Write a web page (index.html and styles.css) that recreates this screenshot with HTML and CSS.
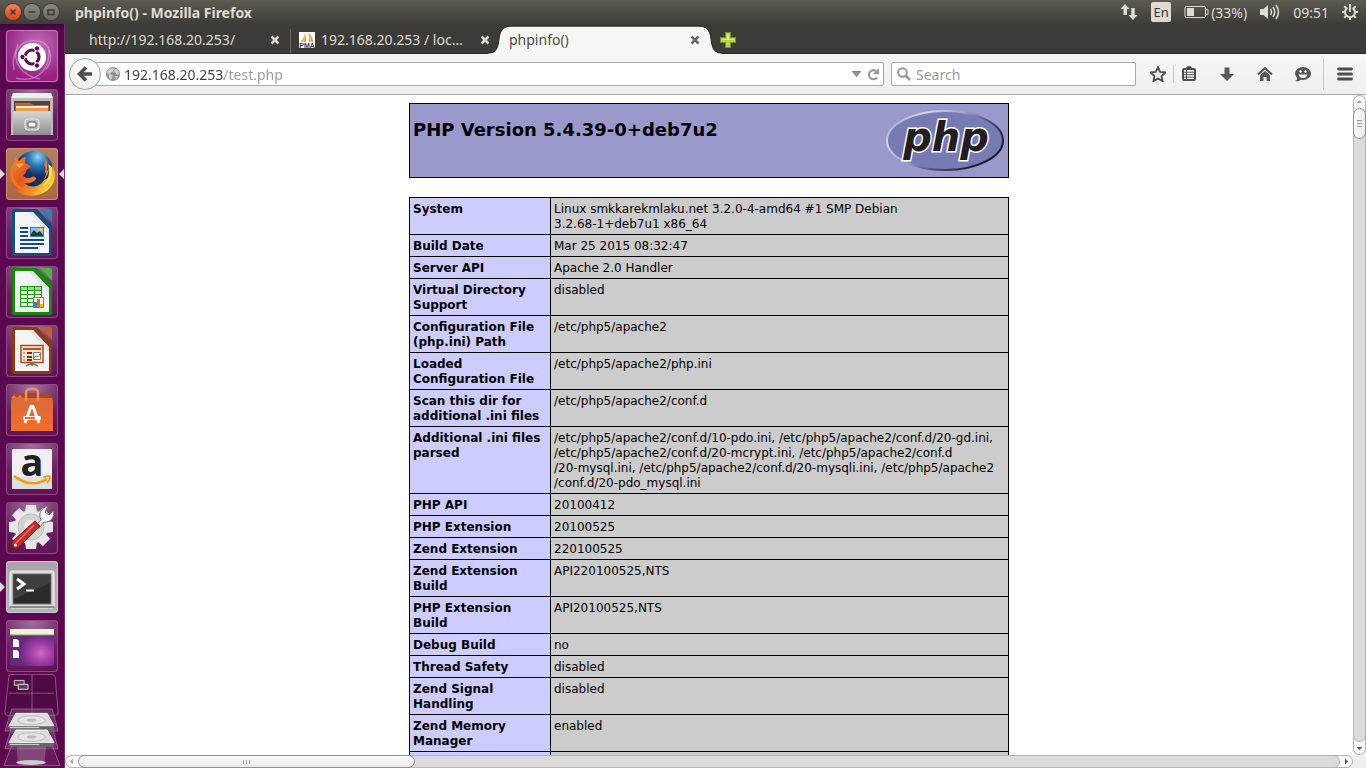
FILE: index.html
```
<!DOCTYPE html>
<html lang="en">
<head>
    <meta charset="UTF-8">
    <meta name="viewport" content="width=device-width, initial-scale=1.0">
    <title>phpinfo() - Mozilla Firefox</title>
    <link rel="stylesheet" href="styles.css">
</head>
<body>
    <header class="panel">
        <div class="window-buttons">
            <button class="win close" aria-label="Close window"><svg viewBox="0 0 16 16"><path d="M5.500 5.500l5 5M10.500 5.500l-5 5"/></svg></button>
            <button class="win" aria-label="Minimize"><svg viewBox="0 0 16 16"><path d="M4.500 8h7"/></svg></button>
            <button class="win" aria-label="Maximize"><svg viewBox="0 0 16 16"><path d="M5 6h6v4.500h-6z"/></svg></button>
        </div>
        <div class="window-title">phpinfo() - Mozilla Firefox</div>
        <div class="indicators">
            <svg width="18" height="18" viewBox="0 0 18 18"><path d="M5 1L0.500 6H3.500V12H7V6H9.500zM13 17L8.500 12H11.300V5H14.700V12H17.500z" fill="#dfdbd2"/></svg>
            <span class="lang">En</span>
            <span class="battery">
                <svg width="25" height="14" viewBox="0 0 25 14"><rect x="1" y="1.500" width="20.500" height="11" rx="1.500" fill="none" stroke="#dfdbd2"/><path d="M22 4.500h2v5h-2" fill="none" stroke="#dfdbd2"/><path d="M3 3h7v8H3z" fill="#dfdbd2"/></svg>
                (33%)
            </span>
            <svg width="20" height="18" viewBox="0 0 20 18"><path d="M0 6H3.500L8 2V16L3.500 12H0z" fill="#dfdbd2"/><path d="M10.500 6q2 3 0 6M13 4q3.500 5 0 10M16 2q5 7 0 14" fill="none" stroke="#dfdbd2" stroke-width="1.500"/></svg>
            <time>09:51</time>
            <svg width="16" height="16" viewBox="0 0 16 16"><g fill="none" stroke="#dfdbd2" stroke-width="2"><path d="M5.500 3.800a5 5 0 1 0 5 0"/><path d="M8 0v8"/><path d="M2.300 2.300l2 2M13.700 2.300l-2 2M0 8h3M13 8h3M2.300 13.700l2-2M13.700 13.700l-2-2M8 13v3"/></g></svg>
        </div>
    </header>

    <div class="desktop">
        <nav class="launcher" aria-label="Launcher">
            <ul>
                <li><button class="tile dash" aria-label="Dash">
                    <svg viewBox="0 0 52 52">
                        <g fill="none" stroke="#e3b0dc" stroke-opacity=".5" stroke-width="1.500">
                            <path d="M8 40C4 20 18 6 36 12C46 17 47 32 40 39"/><path d="M10 48C34 54 44 36 43 20"/><path d="M12 14C4 34 18 46 34 49"/>
                        </g>
                        <circle cx="26" cy="27" r="14" fill="#fff"/>
                        <circle cx="26" cy="27" r="7" fill="none" stroke="#5d0b50" stroke-width="3.200"/>
                        <path d="M26 27h-11M26 27l6-10M26 27l6 10" stroke="#fff" stroke-width="1.500"/>
                        <g fill="#5d0b50" stroke="#fff" stroke-width="1"><circle cx="16.500" cy="27" r="2.700"/><circle cx="31" cy="18.500" r="2.700"/><circle cx="31" cy="35.500" r="2.700"/></g>
                        <circle cx="26" cy="27" r="5.200" fill="#fff"/>
                    </svg></button></li>
                <li><button class="tile" aria-label="Files">
                    <svg viewBox="0 0 52 52">
                        <defs><linearGradient id="steel" x2="0" y2="1"><stop stop-color="#d8d8d8"/><stop offset="1" stop-color="#8e8e8e"/></linearGradient></defs>
                        <path d="M7 4H45L47 10V46H5V10z" fill="#bcbcbc"/><path d="M7 4H45L47 9H5z" fill="#eee"/>
                        <path d="M8 12H44V23H8z" fill="#50443b"/>
                        <path d="M9 14H25L27 16H43V24H9z" fill="#d35b1b"/><path d="M10 17H42V19H10z" fill="#fff1df"/><path d="M10 19H42V23H10z" fill="#f39a46"/>
                        <path d="M7 22H45V46H7z" fill="url(#steel)"/>
                        <rect x="19" y="30" width="14" height="11" rx="3" fill="#bbb" stroke="#e9e9e9"/>
                        <rect x="22" y="33" width="8" height="5" rx="1" fill="#fff" stroke="#555"/>
                    </svg></button></li>
                <li><button class="tile firefox running current" aria-label="Firefox">
                    <svg viewBox="0 0 52 52">
                        <defs>
                            <radialGradient id="globe" cx=".6" cy=".15"><stop stop-color="#8ad4f4"/><stop offset=".5" stop-color="#2377b8"/><stop offset="1" stop-color="#142f67"/></radialGradient>
                            <linearGradient id="fox" x1="0" y1="0" x2="1" y2=".7"><stop stop-color="#f39132"/><stop offset=".45" stop-color="#e4551d"/><stop offset=".75" stop-color="#f3942a"/><stop offset="1" stop-color="#fbe13c"/></linearGradient>
                        </defs>
                        <circle cx="28" cy="22" r="19" fill="url(#globe)"/>
                        <path d="M36 7C39 11 40 14 38 17C40 19 40 23 38 26L43 21C42 26 40 29 38 32C45 30 47 23 46 17C52 27 48 39 39 44C27 51 11 48 6 37C2 28 4 20 8 15L9 9L13 13C15 11 17 9 20 9L19 15L25 18C25 20 21 21 20 23C20 26 18 26 17 28C20 30 23 31 26 29C28 28 30 29 30 31C27 35 22 36 18 35C25 41 34 39 38 32C40 27 42 20 41 13z" fill="url(#fox)"/>
                        <path d="M42 16C45 27 41 35 35 39C43 37 47 28 46 19z" fill="#ffe14c"/>
                        <path d="M6 20C6 35 14 41 27 43C17 45 9 40 6 32z" fill="#f5842c" fill-opacity=".7"/>
                        <path d="M10 17q4-3 8-1l-5 4z" fill="#f9a947"/>
                    </svg></button></li>
                <li><button class="tile" aria-label="LibreOffice Writer">
                    <svg viewBox="0 0 52 52">
                        <path d="M8 2H31L46 18V47Q46 49 44 49H8Q6 49 6 47V4Q6 2 8 2z" fill="#124f7d"/><path d="M9 5H27L43 22V46H9z" fill="#f4f4f4"/>
                        <path d="M27 5L43 22V28L22 5z" fill="#dcdcdc" fill-opacity=".6"/><path d="M34 2H44Q46 2 46 4V15z" fill="#2a80b5"/>
                        <path d="M14 20h8v2h-8zM14 24h8v2h-8zM14 28h8v2h-8zM14 32h24v2H14zM14 36h24v2H14zM14 40h18v2H14z" fill="#154e7c"/>
                        <path d="M24 20H38V30H24z" fill="#2d80b5"/><path d="M25 21H37V29H25z" fill="#8dc5e8"/><path d="M25 29V27L28 23L31 26L34 24L37 28V29z" fill="#2e3436"/><circle cx="35" cy="22.500" r="1.500" fill="#f5d742"/>
                    </svg></button></li>
                <li><button class="tile" aria-label="LibreOffice Calc">
                    <svg viewBox="0 0 52 52">
                        <path d="M8 2H31L46 18V47Q46 49 44 49H8Q6 49 6 47V4Q6 2 8 2z" fill="#18880d"/><path d="M9 5H27L43 22V46H9z" fill="#f4f4f4"/>
                        <path d="M27 5L43 22V28L22 5z" fill="#dcdcdc" fill-opacity=".6"/><path d="M34 2H44Q46 2 46 4V15z" fill="#50b33b"/>
                        <path d="M14 20H36V41H14z" fill="#189c10"/>
                        <path d="M15 21h6v3h-6zM22 21h6v3h-6zM29 21h6v3h-6z" fill="#a3db8e"/>
                        <path d="M15 25h6v3h-6zM22 25h6v3h-6zM29 25h6v3h-6zM15 29h6v3h-6zM22 29h6v3h-6zM29 29h6v3h-6zM15 33h6v3h-6zM22 33h6v3h-6zM15 37h6v3h-6zM22 37h6v3h-6z" fill="#e5f6dd"/>
                        <path d="M27.500 31.500H37.500V41.500H27.500z" fill="#fff" stroke="#777"/><path d="M28 36h3v5h-3z" fill="#2985c7"/><path d="M31 33h3v8h-3z" fill="#e06b24"/><path d="M34 38h3v3h-3z" fill="#f5bd17"/>
                    </svg></button></li>
                <li><button class="tile" aria-label="LibreOffice Impress">
                    <svg viewBox="0 0 52 52">
                        <path d="M8 2H31L46 18V47Q46 49 44 49H8Q6 49 6 47V4Q6 2 8 2z" fill="#8b3c11"/><path d="M9 5H27L43 22V46H9z" fill="#f4f4f4"/>
                        <path d="M27 5L43 22V28L22 5z" fill="#dcdcdc" fill-opacity=".6"/><path d="M34 2H44Q46 2 46 4V15z" fill="#b9622e"/>
                        <path d="M15 20.500H37V37.500H15z" fill="#fae8de" stroke="#b34612" stroke-width="1.500"/><path d="M17 23h18v2H17z" fill="#c55018"/>
                        <path d="M17 27h2v2h-2zM17 31h2v2h-2zM17 34h2v2h-2z" fill="#e8a074"/><path d="M21 27h5v2h-5zM21 31h5v2h-5zM21 34h5v2h-5z" fill="#7c2e0b"/>
                        <path d="M27.500 27.500h7v7h-7z" fill="#fff" stroke="#777"/><path d="M28 33l2-2 2 1 2-3" fill="none" stroke="#2c9c2a"/>
                        <path d="M20 41l6-3 6 3M26 38v3" fill="none" stroke="#777" stroke-width="1.500"/>
                    </svg></button></li>
                <li><button class="tile" aria-label="Ubuntu Software Center">
                    <svg viewBox="0 0 52 52">
                        <defs><linearGradient id="bag" x2="0" y2="1"><stop stop-color="#d9693b"/><stop offset="1" stop-color="#f26d29"/></linearGradient></defs>
                        <path d="M8 9H44L47 17V47H5V17z" fill="url(#bag)"/><path d="M8 9H44L47 14H5z" fill="#a34725"/><path d="M5 14l3-3 3 3 3-3 3 3z" fill="#e67a49"/>
                        <path d="M20 17V9Q20 5 24 5H28Q32 5 32 9V17" fill="none" stroke="#f08e61" stroke-width="2.500"/>
                        <path d="M19 39L25 22.500H27L33 39" fill="none" stroke="#fff" stroke-width="3"/>
                        <rect x="17" y="32" width="18" height="4" rx="1.500" fill="#fff"/><path d="M19 33h10v2H19z" fill="#ee6d2f"/>
                    </svg></button></li>
                <li><button class="tile" aria-label="Amazon">
                    <svg viewBox="0 0 52 52">
                        <rect x="6" y="6" width="40" height="40" rx="1" fill="#f0f0f0"/><path d="M6 34H46V46H6z" fill="#dedede"/>
                        <text x="26" y="33" text-anchor="middle" font-family="Open Sans" font-weight="bold" font-size="38" fill="#222">a</text>
                        <path d="M8 33Q25 46 41 36" fill="none" stroke="#f59b0b" stroke-width="2.500"/><path d="M37 34.500Q43 32 44 33.500Q44 37 41 40" fill="none" stroke="#f59b0b" stroke-width="1.800"/>
                    </svg></button></li>
                <li><button class="tile" aria-label="System Settings">
                    <svg viewBox="0 0 52 52">
                        <g fill="#e7e7e7"><circle cx="25" cy="25" r="17"/><path d="M20 3h10l1 7H19zM20 47h10l1-7H19zM3 20v10l7 1V19zM47 20v10l-7 1V19zM6 13l7-7 6 5-8 8zM37 6l7 7-5 6-8-8zM6 37l7 7 6-5-8-8zM37 44l7-7-5-6-8 8z"/></g>
                        <circle cx="25" cy="25" r="13" fill="#d2d2d2" stroke="#bdbdbd"/><circle cx="25" cy="25" r="7" fill="#eee"/>
                        <path d="M29 24L35 18C32 11 35 6 42 4L39 10L43 13L47 9C49 16 44 21 38 20L32 27z" fill="#f1f1f1" stroke="#777" stroke-width="1"/>
                        <path d="M29 19L34 24L13 45Q10 48 7 45Q4 42 7 39z" fill="#cf2823" stroke="#8c1010"/><path d="M28 23L10 41" stroke="#ef7870" stroke-width="1.500"/><circle cx="9.500" cy="43" r="1.500" fill="#fff"/>
                    </svg></button></li>
                <li><button class="tile terminal running" aria-label="Terminal">
                    <svg viewBox="0 0 52 52">
                        <rect x="4" y="10" width="44" height="37" rx="2" fill="#d9d9d9" stroke="#f2f2f2"/><path d="M4 45h44v2H4z" fill="#8d8d8d"/>
                        <rect x="7" y="13" width="38" height="30" fill="#2b2b2b" stroke="#777"/><path d="M8 14H44V22L8 38z" fill="#4b4b4b" fill-opacity=".6"/>
                        <path d="M11 18L18 23L11 28" fill="none" stroke="#fff" stroke-width="3"/><path d="M20 29.500h8" stroke="#fff" stroke-width="2"/>
                    </svg></button></li>
                <li><button class="tile" aria-label="Show Desktop">
                    <svg viewBox="0 0 52 52">
                        <defs><radialGradient id="wall" cx=".7" cy=".65"><stop stop-color="#cb6cc4"/><stop offset=".5" stop-color="#a23ba6"/><stop offset="1" stop-color="#66297c"/></radialGradient></defs>
                        <path d="M4 9H48V44Q48 46 46 46H6Q4 46 4 44z" fill="url(#wall)"/><path d="M4 9H48V15H4z" fill="#f1efe0"/><path d="M4 15h44" stroke="#92985c"/>
                        <path d="M7 19h4l2 2v6H7zM7 30h4l2 2v6H7z" fill="#fff"/>
                    </svg></button></li>
                <!-- tiles folded at the bottom of the launcher -->
                <li class="folded"><button aria-label="More items">
                    <svg viewBox="0 0 65 96">
                        <g stroke="#b285ac" stroke-opacity=".6">
                            <path d="M11 2.500H53Q55 2.500 56 5L59 41Q59 44 57 44H7Q5 44 5 41L9 5Q9 2.500 11 2.500z" fill="#4a0841" fill-opacity=".6"/>
                            <path d="M9 21.500H55M32.500 3V42" fill="none"/>
                            <path d="M12 37.500H53L59 60H5zM12 55.500H53L59 78H5z" fill="#a17a9d" fill-opacity=".3"/>
                            <path d="M12 74.500H53L61 95H4z" fill="#79306f" fill-opacity=".4"/>
                        </g>
                        <path d="M14.500 8.500h10v5h-10z" fill="#5d3a58" stroke="#ccc"/><path d="M18.500 12.500h10v5h-10z" fill="#5d3a58" stroke="#ddd"/>
                        <path d="M17 75H47L45 93H18z" fill="#b4a0b3" fill-opacity=".35"/><ellipse cx="31.500" cy="92" rx="15" ry="2.500" fill="#ccc"/>
                        <g id="drive"><path d="M16 42H48L55 55H9z" fill="#dcdcdc" stroke="#f4f4f4"/><path d="M9 55H55V58Q55 59 53 59H11Q9 59 9 58z" fill="#666"/><path d="M10 56.500H40" stroke="#ddd"/><ellipse cx="32" cy="49" rx="14" ry="4.500" fill="#e4e4e4" stroke="#bbb"/><ellipse cx="32" cy="49" rx="5" ry="1.500" fill="#bbb"/></g>
                        <use href="#drive" y="17"/>
                    </svg></button></li>
            </ul>
        </nav>

        <main class="browser">
            <div class="tabs">
                <div class="tab">
                    <span class="tab-title">http://192.168.20.253/</span>
                    <button class="tab-close" aria-label="Close tab"><svg viewBox="0 0 16 16"><path d="M4.500 4.500l7 7M11.500 4.500l-7 7"/></svg></button>
                </div>
                <div class="tab next">
                    <svg class="favicon" viewBox="0 0 16 16"><path d="M0 0H16V16H0z" fill="#fff"/><path d="M7 1V10H2zM9 1Q14 4 14 10H10Q11 5 9 1z" fill="#f7981d"/><path d="M7 2l-3 8M11 4l1 6" stroke="#ffd27d" stroke-width="1"/><text x="8" y="15.500" text-anchor="middle" font-family="Liberation Sans" font-weight="bold" font-size="7" fill="#33346b">PMA</text></svg>
                    <span class="tab-title">192.168.20.253 / loc…</span>
                    <button class="tab-close" aria-label="Close tab"><svg viewBox="0 0 16 16"><path d="M4.500 4.500l7 7M11.500 4.500l-7 7"/></svg></button>
                </div>
                <div class="tab active">
                    <svg class="tab-shape" viewBox="0 0 234 29" preserveAspectRatio="none"><path d="M0 28.500C9 28 10 22 11 14C12 6 15 1.500 24 1.500H210C219 1.500 222 6 223 14C224 22 225 28 234 28.500V29H0z" fill="#f6f6f5"/><path d="M0 28C9 28 10 22 11 14C12 5 15 1 24 1H210C219 1 222 5 223 14C224 22 225 28 234 28" fill="none" stroke="#272622"/></svg>
                    <span class="tab-title">phpinfo()</span>
                    <button class="tab-close" aria-label="Close tab"><svg viewBox="0 0 16 16"><path d="M4.500 4.500l7 7M11.500 4.500l-7 7"/></svg></button>
                </div>
                <button class="new-tab" aria-label="New tab"><svg viewBox="0 0 16 16"><path d="M5.500 .5H10.500V5.500H15.500V10.500H10.500V15.500H5.500V10.500H.5V5.500H5.500z" fill="#b6d545" stroke="#70952b"/><path d="M7 2h2v5h5v1H2V7h5z" fill="#e0ee94"/></svg></button>
            </div>

            <div class="toolbar">
                <button class="back" aria-label="Back"><svg viewBox="0 0 16 16"><path d="M9 1.500L2.500 8L9 14.500M3 8H15" fill="none" stroke="#4d4d4d" stroke-width="3.500"/></svg></button>
                <div class="field url">
                    <svg width="14" height="14" viewBox="0 0 14 14"><circle cx="7" cy="7" r="7" fill="#929292"/><path d="M1 5L3 2L7 1L8 3L6 5L4 6L5 8L7 9L5 13L3 11L3 8zM9 2L12 3L13 7L11 8L10 6L8 5zM9 9l3 0-2 4z" fill="#d2d2d2"/></svg>
                    <input type="text" id="address" aria-label="Address" value="192.168.20.253/test.php">
                    <button aria-label="Show history"><svg width="9" height="6" viewBox="0 0 9 6"><path d="M.5.5h8L4.500 5.500z" fill="#999" stroke="#777"/></svg></button>
                    <button aria-label="Reload"><svg width="12" height="13" viewBox="0 0 12 13"><path d="M9 3A4.500 4.500 0 1 0 10 9.500" fill="none" stroke="#8c9aaa" stroke-width="2.200"/><path d="M12 0V6H6z" fill="#8c9aaa"/></svg></button>
                </div>
                <div class="field search">
                    <svg width="14" height="14" viewBox="0 0 14 14"><circle cx="5.500" cy="5.500" r="4.300" fill="none" stroke="#969696" stroke-width="2"/><path d="M8.500 8.500L13 13" stroke="#969696" stroke-width="2.500"/></svg>
                    <input type="text" id="search" aria-label="Search" placeholder="Search">
                </div>
                <button class="tool star" aria-label="Bookmark this page"><svg viewBox="0.500 0.500 15 15"><path d="M8 1.500L10 6L15 6.500L11.300 9.900L12.300 14.700L8 12.200L3.700 14.700L4.700 9.900L1 6.500L6 6z" fill="none" stroke="#4d4d4d" stroke-width="1.700"/></svg></button>
                <button class="tool list" aria-label="Bookmarks"><svg viewBox="0 0 16 16"><path d="M5 3Q5 0 8 0T11 3" fill="#4d4d4d"/><rect x="2" y="3" width="12" height="11" rx="1" fill="#fff" stroke="#4d4d4d" stroke-width="2"/><path d="M3 6.200h10M3 8.700h10M3 11.200h10M5.500 4v10" stroke="#4d4d4d" stroke-width="1"/></svg></button>
                <button class="tool" aria-label="Downloads"><svg viewBox="0 0 16 16"><path d="M5.500 1.500h5V8H15L8 15L1 8h4.500z" fill="#5a5a5a"/></svg></button>
                <button class="tool" aria-label="Home"><svg viewBox="0 0 16 16"><path d="M1 8.500L8 2l7 6.500" fill="none" stroke="#4d4d4d" stroke-width="1.800"/><path d="M3 9.500L8 5l5 4.500V15H9.500V11h-3v4H3z" fill="#5a5a5a"/></svg></button>
                <button class="tool" aria-label="Chat"><svg viewBox="0 0 16 16"><ellipse cx="8" cy="7.500" rx="8" ry="6.500" fill="#555"/><path d="M2 10Q3 14 0 15Q5 16 7 12z" fill="#555"/><circle cx="5.500" cy="5.500" r="1.200" fill="#fff"/><circle cx="10.500" cy="5.500" r="1.200" fill="#fff"/><path d="M3.500 8.500h9q-1 3.500-4.500 3.500t-4.500-3.500z" fill="#fff"/></svg></button>
                <button class="menu" aria-label="Open menu"><svg viewBox="0 0 16 16"><path d="M1.500 3h13M1.500 8h13M1.500 13h13" stroke="#4d4d4d" stroke-width="2.800" stroke-linecap="round"/></svg></button>
            </div>

            <div class="viewport">
                <div class="page">
                    <section class="banner">
                        <h1>PHP Version 5.4.39-0+deb7u2</h1>
                        <a href="http://www.php.net/" aria-label="PHP">
                            <svg width="120" height="67" viewBox="0 0 120 67">
                                <defs><linearGradient id="rim" x1="0" y1="0" x2="1" y2=".6"><stop stop-color="#8384b8"/><stop offset=".25" stop-color="#d6d6ea"/><stop offset=".5" stop-color="#9fa1cc"/><stop offset=".75" stop-color="#45466e"/><stop offset="1" stop-color="#17172a"/></linearGradient></defs>
                                <ellipse cx="60" cy="33.500" rx="58" ry="29.500" fill="#777bb3" stroke="url(#rim)" stroke-width="2"/>
                                <text x="61" y="44" text-anchor="middle" class="php">php</text>
                            </svg>
                        </a>
                    </section>
                    <table class="info">
                        <tbody>
                            <tr><th scope="row">System</th><td>Linux smkkarekmlaku.net 3.2.0-4-amd64 #1 SMP Debian<br>3.2.68-1+deb7u1 x86_64</td></tr>
                            <tr><th scope="row">Build Date</th><td>Mar 25 2015 08:32:47</td></tr>
                            <tr><th scope="row">Server API</th><td>Apache 2.0 Handler</td></tr>
                            <tr><th scope="row">Virtual Directory Support</th><td>disabled</td></tr>
                            <tr><th scope="row">Configuration File (php.ini) Path</th><td>/etc/php5/apache2</td></tr>
                            <tr><th scope="row">Loaded Configuration File</th><td>/etc/php5/apache2/php.ini</td></tr>
                            <tr><th scope="row">Scan this dir for additional .ini files</th><td>/etc/php5/apache2/conf.d</td></tr>
                            <tr><th scope="row">Additional .ini files parsed</th><td>/etc/php5/apache2/conf.d/10-pdo.ini, /etc/php5/apache2/conf.d/20-gd.ini,<br>/etc/php5/apache2/conf.d/20-mcrypt.ini, /etc/php5/apache2/conf.d<br>/20-mysql.ini, /etc/php5/apache2/conf.d/20-mysqli.ini, /etc/php5/apache2<br>/conf.d/20-pdo_mysql.ini</td></tr>
                            <tr><th scope="row">PHP API</th><td>20100412</td></tr>
                            <tr><th scope="row">PHP Extension</th><td>20100525</td></tr>
                            <tr><th scope="row">Zend Extension</th><td>220100525</td></tr>
                            <tr><th scope="row">Zend Extension Build</th><td>API220100525,NTS</td></tr>
                            <tr><th scope="row">PHP Extension Build</th><td>API20100525,NTS</td></tr>
                            <tr><th scope="row">Debug Build</th><td>no</td></tr>
                            <tr><th scope="row">Thread Safety</th><td>disabled</td></tr>
                            <tr><th scope="row">Zend Signal Handling</th><td>disabled</td></tr>
                            <tr><th scope="row">Zend Memory Manager</th><td>enabled</td></tr>
                            <tr><th scope="row">&nbsp;</th><td>&nbsp;</td></tr>
                        </tbody>
                    </table>
                </div>
                <div class="scrollbar vertical">
                    <svg class="arrow" viewBox="0 0 13 13"><path d="M3.500 8L6.500 5L9.500 8z" fill="#aaa"/></svg>
                    <div class="thumb"></div>
                    <div class="track"></div>
                    <svg class="arrow" viewBox="0 0 13 13"><path d="M3.500 5L6.500 8L9.500 5z" fill="#555"/></svg>
                </div>
                <div class="scrollbar horizontal">
                    <svg class="arrow" viewBox="0 0 13 13"><path d="M8 3.500L5 6.500L8 9.500z" fill="#aaa"/></svg>
                    <div class="thumb"></div>
                    <div class="track"></div>
                    <svg class="arrow" viewBox="0 0 13 13"><path d="M5 3.500L8 6.500L5 9.500z" fill="#555"/></svg>
                </div>
            </div>
        </main>
    </div>
</body>
</html>
```

FILE: styles.css
```
* {
    box-sizing: border-box;
}
body {
    margin: 0;
    height: 100vh;
    display: flex;
    flex-direction: column;
    overflow: hidden;
    font-family: "Noto Sans", sans-serif;
    font-size: 14px;
    background-color: white;
}
button {
    margin: 0;
    padding: 0;
    border: none;
    background: none;
    cursor: pointer;
}
svg {
    display: block;
    flex-shrink: 0;
}

/* top panel */
.panel {
    display: flex;
    align-items: center;
    height: 24px;
    padding: 0 8px 0 5px;
    color: #dfdbd2;
    background: linear-gradient(#5e5b50, #3d3c38);
}
.window-buttons {
    display: flex;
    gap: 3px;
}
.win {
    width: 16px;
    height: 16px;
    border-radius: 50%;
    background: linear-gradient(#8b887f, #6c6a63);
    box-shadow: 0 0 0 1px #3b3a36;
}
.win svg {
    fill: none;
    stroke: #3b3a36;
    stroke-width: 1.5;
}
.win.close {
    background: linear-gradient(#f37f58, #dd4814);
}
.window-title {
    margin-left: 16px;
    font-weight: bold;
}
.indicators {
    display: flex;
    align-items: center;
    gap: 13px;
    margin-left: auto;
}
.lang {
    width: 20px;
    height: 20px;
    border-radius: 2px;
    background-color: #dfdbd2;
    color: #3c3b37;
    font-size: 13px;
    line-height: 20px;
    text-align: center;
}
.battery {
    display: flex;
    align-items: center;
    gap: 2px;
}

/* launcher */
.desktop {
    flex: 1;
    min-height: 0;
    display: flex;
}
.launcher {
    width: 65px;
    background: linear-gradient(#3e0637, #5c0851 8px);
    border-right: 1px solid #7b2b71;
    overflow: hidden;
}
.launcher ul {
    list-style: none;
    margin: 0;
    padding: 6px 0 0;
}
.tile {
    position: relative;
    display: block;
    width: 52px;
    height: 52px;
    margin: 0 0 7px 6px;
    border-radius: 4px;
    background: radial-gradient(circle at 50% 0, #a3739d, #692060 60%, #5f1155);
    box-shadow: inset 0 0 0 1px #8a4d82;
}
.tile svg {
    overflow: visible;
}
.tile.dash {
    background: radial-gradient(circle at 60% 30%, #c173b8, #972183 70%);
    box-shadow: inset 0 0 0 1px #c07ab8;
}
.tile.firefox {
    background: linear-gradient(#b87e5c, #a86742);
    box-shadow: inset 0 0 0 1px #c59373;
}
.tile.terminal {
    background: linear-gradient(#aaa1aa, #b9b1b9);
    box-shadow: inset 0 0 0 1px #d0cad0;
}
.tile.running::before,
.tile.current::after {
    content: "";
    position: absolute;
    top: 21px;
    border: 5px solid transparent;
}
.tile.running::before {
    left: -6px;
    border-right: none;
    border-left-color: #ddd;
}
.tile.current::after {
    right: -6px;
    border-left: none;
    border-right-color: #ddd;
}
.folded {
    margin-top: -7px;
}
.folded button {
    display: block;
    width: 100%;
}

/* tabs */
.browser {
    flex: 1;
    min-width: 0;
    display: flex;
    flex-direction: column;
}
.tabs {
    display: flex;
    height: 30px;
    padding-left: 15px;
    background-color: #3c3b37;
    border-bottom: 1px solid #272622;
}
.tab {
    position: relative;
    display: flex;
    align-items: center;
    gap: 6px;
    width: 210px;
    height: 30px;
    padding: 2px 7px 0 9px;
    color: #dfdbd2;
}
.tab.next {
    background: linear-gradient(#6a695f, #6a695f) 0 5px / 1px 24px no-repeat;
}
.tab.active {
    color: #4c4c4c;
}
.favicon {
    width: 16px;
    height: 16px;
}
.tab-title {
    position: relative;
    flex: 1;
    padding-bottom: 2px;
    white-space: nowrap;
}
.tab-close {
    position: relative;
    width: 16px;
    height: 16px;
}
.tab-close svg {
    stroke: #dfdbd2;
    stroke-width: 2.5;
}
.tab.active .tab-close svg {
    stroke: #666;
}
.tab-shape {
    position: absolute;
    left: -12px;
    top: 1px;
    width: 234px;
    height: 29px;
}
.new-tab {
    width: 16px;
    height: 16px;
    margin: 8px 0 0 10px;
}

/* navigation toolbar */
.toolbar {
    display: flex;
    align-items: center;
    height: 41px;
    padding-left: 4px;
    background: linear-gradient(#f6f6f5, #f0efed);
    border-bottom: 1px solid #aaa9a3;
}
.back {
    position: relative;
    z-index: 1;
    width: 32px;
    height: 32px;
    padding: 7px;
    border: 1px solid #9aa3ac;
    border-radius: 50%;
    background: linear-gradient(#fdfdfd, #f0f0ef);
}
.field {
    display: flex;
    align-items: center;
    height: 24px;
    border: 1px solid #aaa9a3;
    border-radius: 2px;
    background-color: white;
}
.field input {
    flex: 1;
    min-width: 0;
    padding: 0;
    border: none;
    outline: none;
    font: 14px "Noto Sans", sans-serif;
}
.url {
    flex: 1;
    margin-left: -8px;
    padding: 0 4px 0 12px;
    gap: 4px;
}
/* host dark, path grey */
.url input {
    color: transparent;
    background: linear-gradient(to right, #3c3c3c 100px, #999 100px);
    background-clip: text;
    -webkit-background-clip: text;
}
.url button + button {
    margin-left: 2px;
}
.search {
    width: 245px;
    margin-left: 7px;
    padding: 0 5px;
    gap: 5px;
}
.search input::placeholder {
    color: #999;
}
.tool {
    display: flex;
    justify-content: center;
    width: 30px;
    margin-left: 8px;
}
.tool svg,
.menu svg {
    width: 16px;
    height: 16px;
}
.tool.star {
    margin-left: 7px;
}
.tool.list {
    width: 31px;
    margin-left: 0;
    padding: 1px 0;
    border-left: 1px solid #c3c8ce;
}
.menu {
    display: flex;
    align-items: center;
    justify-content: center;
    width: 43px;
    height: 32px;
    margin-left: 5px;
    border-left: 1px solid #c3c8ce;
}

/* page */
.viewport {
    flex: 1;
    min-height: 0;
    display: grid;
    grid-template-columns: 1fr 13px;
    grid-template-rows: 1fr 13px;
    background-color: #f0efed;
}
.page {
    min-height: 0;
    overflow: hidden;
    padding: 8px;
    background-color: white;
    color: black;
    font-family: "DejaVu Sans", sans-serif;
    font-size: 12px;
    line-height: 15px;
}
.banner {
    display: flex;
    justify-content: space-between;
    align-items: flex-start;
    max-width: 600px;
    margin: 0 auto 19px;
    padding: 3px;
    border: 1px solid black;
    background-color: #9999cc;
}
.banner h1 {
    margin: 12px 0;
    font-size: 18px;
    line-height: 21px;
}
.php {
    font: italic bold 40px "DejaVu Sans", sans-serif;
    fill: #211d22;
    stroke: white;
    stroke-width: 3px;
    paint-order: stroke;
}
.info {
    width: 100%;
    max-width: 600px;
    margin: 0 auto;
    border-collapse: collapse;
    table-layout: fixed;
}
.info th,
.info td {
    padding: 4px 3px 2px;
    border: 1px solid black;
    vertical-align: top;
    text-align: left;
    background-color: #cccccc;
}
.info th {
    width: 141px;
    background-color: #ccccff;
}

/* scrollbars */
.scrollbar {
    display: flex;
    background-color: #fafafa;
    border-radius: 7px;
    box-shadow: inset 0 0 0 1px #b5b4b0;
}
.scrollbar.vertical {
    flex-direction: column;
}
.arrow {
    width: 13px;
    height: 13px;
}
.thumb {
    position: relative;
    z-index: 1;
    display: flex;
    align-items: center;
    justify-content: center;
    border: 1px solid #8f8e8a;
    border-radius: 7px;
    background: linear-gradient(#fafafa, #ebeae8);
}
.vertical .thumb {
    height: 31px;
    background: linear-gradient(to right, #fafafa, #ebeae8);
}
.horizontal .thumb {
    width: 337px;
}
.thumb::after {
    content: "";
    width: 5px;
    height: 7px;
    background: repeating-linear-gradient(#999 0 1px, transparent 1px 3px);
}
.horizontal .thumb::after {
    width: 7px;
    height: 4px;
    background: repeating-linear-gradient(to right, #999 0 1px, transparent 1px 3px);
}
.track {
    flex: 1;
    background-color: #dcdbd9;
    border: 1px solid #b5b4b0;
}
.vertical .track {
    margin-top: -6px;
    border-radius: 0 0 7px 7px;
    border-top: none;
}
.horizontal .track {
    margin-left: -6px;
    border-radius: 0 7px 7px 0;
    border-left: none;
}
```
